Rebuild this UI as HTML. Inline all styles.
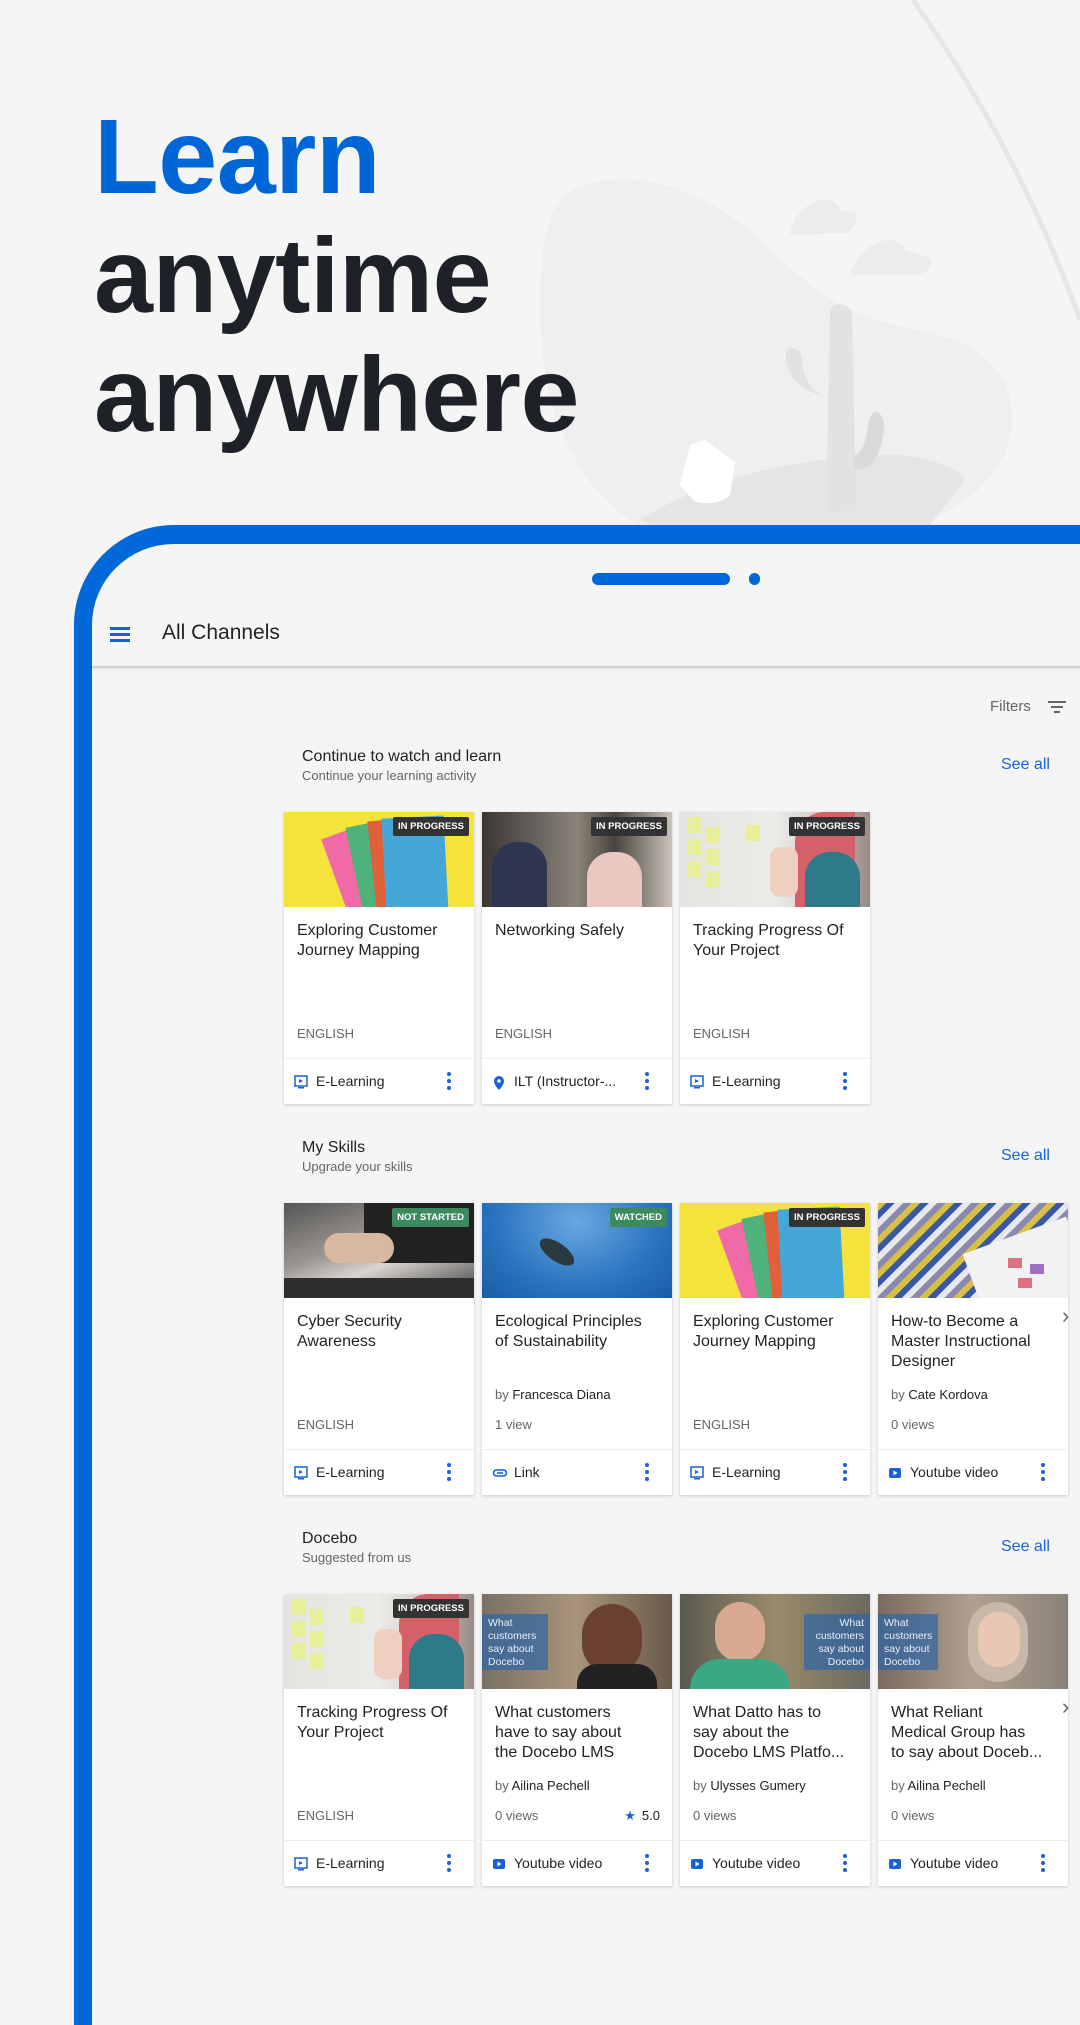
<!DOCTYPE html>
<html><head><meta charset="utf-8">
<style>
*{margin:0;padding:0;box-sizing:border-box}
body{width:1080px;height:1920px;background:#f5f5f5;position:relative;overflow:hidden;font-family:"Liberation Sans",sans-serif}
.h{position:absolute;left:94px;font-weight:bold;font-size:106px;line-height:119px;color:#1f2128;letter-spacing:-0.5px}
.frame{position:absolute;left:74px;top:525px;width:1100px;height:1500px;border-left:18px solid #0068d9;border-top:19px solid #0068d9;border-top-left-radius:100px;background:#f5f5f5}
.a{position:absolute}
.card{position:absolute;width:190px;height:292px;background:#fff;box-shadow:0 1px 3px rgba(0,0,0,.18);overflow:hidden}
.img{position:absolute;left:0;top:0;width:190px;height:95px;overflow:hidden}
.badge{position:absolute;right:5px;top:5px;height:19px;line-height:19px;padding:0 5px;font-size:9.5px;font-weight:bold;color:#fff;background:#333;border-radius:2px}
.g{background:#3d8a5e}
.t{position:absolute;left:13px;top:109px;width:175px;font-size:16px;line-height:20px;color:#222;white-space:nowrap}
.by{position:absolute;left:13px;top:184px;font-size:13px;color:#666}
.by b{font-weight:normal;color:#222}
.m{position:absolute;left:13px;top:214px;font-size:13px;color:#666}
.rt{position:absolute;right:12px;top:214px;font-size:13px;color:#222}
.rt i{color:#1763d6;font-style:normal;margin-right:6px}
.f{position:absolute;left:0;top:246px;width:190px;height:46px;border-top:1px solid #ececec}
.f span{position:absolute;left:32px;top:14px;font-size:14px;color:#222}
.f svg{position:absolute;left:10px;top:16px}
.dots{position:absolute;left:163px;top:13px;width:4px}
.dots i{display:block;width:4px;height:4px;border-radius:2px;background:#1763d6;margin-bottom:3px}
.st{position:absolute;left:302px;font-size:16px;color:#222}
.ss{position:absolute;left:302px;font-size:13px;color:#666}
.sa{position:absolute;left:1001px;font-size:16px;color:#1763d6}
.chev{position:absolute;left:1062px;font-size:22px;color:#666}
.ov{position:absolute;top:20px;width:60px;height:56px;background:rgba(40,100,170,.65);color:#e8eef8;font-size:10.5px;line-height:13px;padding:3px 6px}
</style></head><body>

<svg class="a" style="left:520px;top:0" width="560" height="525" viewBox="520 0 560 525">
<path d="M560 200 C600 160 700 180 760 240 C820 300 860 320 920 330 C990 345 1020 380 1010 440 C990 500 930 525 900 525 L640 525 C590 500 545 430 541 330 C538 260 545 220 560 200Z" fill="#efefef"/>
<path d="M640 520 C700 480 800 455 900 455 C940 460 960 470 965 480 L930 525 L650 525Z" fill="#e5e5e5"/>
<path d="M913 0 C990 110 1040 210 1080 320" stroke="#e6e6e6" stroke-width="5" fill="none"/>
<path d="M790 235 C795 200 835 190 840 210 L855 212 C860 225 850 232 845 233 L790 235Z" fill="#ececec"/>
<path d="M850 275 C860 240 900 230 905 250 L930 258 C935 270 920 275 915 275 L850 275Z" fill="#ececec"/>
<path d="M830 310 C832 302 848 302 852 312 L856 510 L826 512Z" fill="#e2e2e2"/>
<path d="M826 395 C812 395 790 385 786 360 L786 355 C786 345 800 345 802 358 C802 380 815 395 826 395Z" fill="#e2e2e2"/>
<path d="M854 470 C870 470 880 460 884 430 C886 410 870 405 868 425 C866 445 860 455 854 455Z" fill="#dadada"/>
<path d="M690 445 L705 440 L735 462 L730 495 C720 505 700 505 693 500 L680 485Z" fill="#fff"/>
</svg>

<div class="h" style="top:98px;color:#0066d6">Learn</div>
<div class="h" style="top:217px">anytime</div>
<div class="h" style="top:336px">anywhere</div>

<div class="frame"></div>
<div class="a" style="left:592px;top:573px;width:138px;height:12px;border-radius:6px;background:#0068d9"></div>
<div class="a" style="left:749px;top:573px;width:11px;height:12px;border-radius:6px;background:#0068d9"></div>

<div class="a" style="left:110px;top:627px;width:20px;height:2.5px;background:#1763d6;box-shadow:0 6px 0 #1763d6,0 12px 0 #1763d6"></div>
<div class="a" style="left:162px;top:621px;font-size:21px;color:#222">All Channels</div>
<div class="a" style="left:92px;top:666px;width:1000px;height:2px;background:#cfcfcf;box-shadow:0 1px 3px rgba(0,0,0,.12)"></div>

<div class="a" style="left:990px;top:698px;font-size:15px;color:#666">Filters</div>
<div class="a" style="left:1048px;top:701px;width:18px;height:2px;background:#666"></div>
<div class="a" style="left:1051px;top:706px;width:12px;height:2px;background:#666"></div>
<div class="a" style="left:1054px;top:711px;width:6px;height:2px;background:#666"></div>

<!-- Section 1 -->
<div class="st" style="top:748px">Continue to watch and learn</div>
<div class="ss" style="top:768px">Continue your learning activity</div>
<div class="sa" style="top:756px">See all</div>

<div class="card" style="left:284px;top:812px">
 <div class="img" style="background:#f4e33a"><div class="a" style="left:50px;top:20px;width:30px;height:80px;background:#f06aa8;transform:rotate(-20deg)"></div><div class="a" style="left:70px;top:12px;width:30px;height:85px;background:#4fb27a;transform:rotate(-12deg)"></div><div class="a" style="left:88px;top:8px;width:26px;height:90px;background:#e0603a;transform:rotate(-6deg)"></div><div class="a" style="left:100px;top:5px;width:62px;height:95px;background:#45a6d8;transform:rotate(-3deg)"></div><div class="badge">IN PROGRESS</div></div>
 <div class="t">Exploring Customer<br>Journey Mapping</div>
 <div class="m">ENGLISH</div>
 <div class="f"><svg width="14" height="14"><rect x="1" y="1" width="12" height="10" fill="none" stroke="#1763d6" stroke-width="1.5"/><path d="M5 4l4 2-4 2z" fill="#1763d6"/><rect x="4" y="12" width="6" height="1.5" fill="#1763d6"/></svg><span>E-Learning</span><div class="dots"><i></i><i></i><i></i></div></div>
</div>
<div class="card" style="left:482px;top:812px">
 <div class="img" style="background:linear-gradient(90deg,#3b3630 0%,#6a6460 30%,#8a8478 50%,#4a4440 70%,#c9c3bb 100%)"><div class="a" style="left:10px;top:30px;width:55px;height:70px;border-radius:25px 25px 0 0;background:#2d3550"></div><div class="a" style="left:105px;top:40px;width:55px;height:60px;border-radius:25px 25px 0 0;background:#e8c8c0"></div><div class="badge">IN PROGRESS</div></div>
 <div class="t">Networking Safely</div>
 <div class="m">ENGLISH</div>
 <div class="f"><svg width="14" height="16"><path d="M7 1a5 5 0 0 0-5 5c0 4 5 9 5 9s5-5 5-9a5 5 0 0 0-5-5z" fill="#1763d6"/><circle cx="7" cy="6" r="1.8" fill="#fff"/></svg><span>ILT (Instructor-...</span><div class="dots"><i></i><i></i><i></i></div></div>
</div>
<div class="card" style="left:680px;top:812px">
 <div class="img" style="background:linear-gradient(90deg,#e4e4e0 0%,#ebebe8 50%,#d8d0cc 70%,#9a8a86 100%)"><div class="a" style="left:8px;top:5px;width:14px;height:16px;background:#e9ee9a;box-shadow:0 22px 0 #e9ee9a,0 44px 0 #e9ee9a,18px 10px 0 #e9ee9a,18px 32px 0 #e9ee9a,18px 54px 0 #e9ee9a,58px 8px 0 #e9ee9a"></div><div class="a" style="left:115px;top:0;width:60px;height:95px;border-radius:30px 0 0 0;background:#d4606a"></div><div class="a" style="left:125px;top:40px;width:55px;height:55px;border-radius:25px 25px 0 0;background:#2f7a88"></div><div class="a" style="left:90px;top:35px;width:28px;height:50px;border-radius:10px;background:#efcfbf"></div><div class="badge">IN PROGRESS</div></div>
 <div class="t">Tracking Progress Of<br>Your Project</div>
 <div class="m">ENGLISH</div>
 <div class="f"><svg width="14" height="14"><rect x="1" y="1" width="12" height="10" fill="none" stroke="#1763d6" stroke-width="1.5"/><path d="M5 4l4 2-4 2z" fill="#1763d6"/><rect x="4" y="12" width="6" height="1.5" fill="#1763d6"/></svg><span>E-Learning</span><div class="dots"><i></i><i></i><i></i></div></div>
</div>

<!-- Section 2 -->
<div class="st" style="top:1139px">My Skills</div>
<div class="ss" style="top:1159px">Upgrade your skills</div>
<div class="sa" style="top:1147px">See all</div>

<div class="card" style="left:284px;top:1203px">
 <div class="img" style="background:linear-gradient(160deg,#555 0%,#9a9590 40%,#d8d4d0 60%,#3a3a3a 100%)"><div class="a" style="left:80px;top:0;width:110px;height:60px;background:#222"></div><div class="a" style="left:40px;top:30px;width:70px;height:30px;border-radius:15px;background:#d8b8a0"></div><div class="a" style="left:0;top:75px;width:190px;height:20px;background:#2e2e2e"></div><div class="badge g">NOT STARTED</div></div>
 <div class="t">Cyber Security<br>Awareness</div>
 <div class="m">ENGLISH</div>
 <div class="f"><svg width="14" height="14"><rect x="1" y="1" width="12" height="10" fill="none" stroke="#1763d6" stroke-width="1.5"/><path d="M5 4l4 2-4 2z" fill="#1763d6"/><rect x="4" y="12" width="6" height="1.5" fill="#1763d6"/></svg><span>E-Learning</span><div class="dots"><i></i><i></i><i></i></div></div>
</div>
<div class="card" style="left:482px;top:1203px">
 <div class="img" style="background:radial-gradient(ellipse at 50% 20%,#6aa8e0 0%,#2a74c0 60%,#1a5ca6 100%)"><div class="a" style="left:55px;top:40px;width:40px;height:18px;border-radius:50%;background:#2a3a40;transform:rotate(35deg)"></div><div class="badge g">WATCHED</div></div>
 <div class="t">Ecological Principles<br>of Sustainability</div>
 <div class="by">by <b>Francesca Diana</b></div>
 <div class="m">1 view</div>
 <div class="f"><svg width="16" height="14"><rect x="1.5" y="4" width="13" height="6" rx="3" fill="none" stroke="#1763d6" stroke-width="1.6"/><rect x="5" y="6.2" width="6" height="1.6" fill="#1763d6"/></svg><span>Link</span><div class="dots"><i></i><i></i><i></i></div></div>
</div>
<div class="card" style="left:680px;top:1203px">
 <div class="img" style="background:#f4e33a"><div class="a" style="left:50px;top:20px;width:30px;height:80px;background:#f06aa8;transform:rotate(-20deg)"></div><div class="a" style="left:70px;top:12px;width:30px;height:85px;background:#4fb27a;transform:rotate(-12deg)"></div><div class="a" style="left:88px;top:8px;width:26px;height:90px;background:#e0603a;transform:rotate(-6deg)"></div><div class="a" style="left:100px;top:5px;width:62px;height:95px;background:#45a6d8;transform:rotate(-3deg)"></div><div class="badge">IN PROGRESS</div></div>
 <div class="t">Exploring Customer<br>Journey Mapping</div>
 <div class="m">ENGLISH</div>
 <div class="f"><svg width="14" height="14"><rect x="1" y="1" width="12" height="10" fill="none" stroke="#1763d6" stroke-width="1.5"/><path d="M5 4l4 2-4 2z" fill="#1763d6"/><rect x="4" y="12" width="6" height="1.5" fill="#1763d6"/></svg><span>E-Learning</span><div class="dots"><i></i><i></i><i></i></div></div>
</div>
<div class="card" style="left:878px;top:1203px">
 <div class="img" style="background:repeating-linear-gradient(135deg,#d8c040 0 6px,#3a58a8 6px 12px,#e8e8ec 12px 18px,#8a8ab0 18px 24px)"><div class="a" style="left:95px;top:30px;width:110px;height:80px;background:#f2f2f4;transform:rotate(-20deg)"></div><div class="a" style="left:130px;top:55px;width:14px;height:10px;background:#e07080;box-shadow:22px 6px 0 #a070c0,10px 20px 0 #e07080"></div></div>
 <div class="t">How-to Become a<br>Master Instructional<br>Designer</div>
 <div class="by">by <b>Cate Kordova</b></div>
 <div class="m">0 views</div>
 <div class="f"><svg width="14" height="14"><rect x="1" y="2" width="12" height="10" rx="2" fill="#1763d6"/><path d="M5.5 4.5l4 2.5-4 2.5z" fill="#fff"/></svg><span>Youtube video</span><div class="dots"><i></i><i></i><i></i></div></div>
</div>
<div class="chev" style="top:1303px">&#8250;</div>

<!-- Section 3 -->
<div class="st" style="top:1530px">Docebo</div>
<div class="ss" style="top:1550px">Suggested from us</div>
<div class="sa" style="top:1538px">See all</div>

<div class="card" style="left:284px;top:1594px">
 <div class="img" style="background:linear-gradient(90deg,#e4e4e0 0%,#ebebe8 50%,#d8d0cc 70%,#9a8a86 100%)"><div class="a" style="left:8px;top:5px;width:14px;height:16px;background:#e9ee9a;box-shadow:0 22px 0 #e9ee9a,0 44px 0 #e9ee9a,18px 10px 0 #e9ee9a,18px 32px 0 #e9ee9a,18px 54px 0 #e9ee9a,58px 8px 0 #e9ee9a"></div><div class="a" style="left:115px;top:0;width:60px;height:95px;border-radius:30px 0 0 0;background:#d4606a"></div><div class="a" style="left:125px;top:40px;width:55px;height:55px;border-radius:25px 25px 0 0;background:#2f7a88"></div><div class="a" style="left:90px;top:35px;width:28px;height:50px;border-radius:10px;background:#efcfbf"></div><div class="badge">IN PROGRESS</div></div>
 <div class="t">Tracking Progress Of<br>Your Project</div>
 <div class="m">ENGLISH</div>
 <div class="f"><svg width="14" height="14"><rect x="1" y="1" width="12" height="10" fill="none" stroke="#1763d6" stroke-width="1.5"/><path d="M5 4l4 2-4 2z" fill="#1763d6"/><rect x="4" y="12" width="6" height="1.5" fill="#1763d6"/></svg><span>E-Learning</span><div class="dots"><i></i><i></i><i></i></div></div>
</div>
<div class="card" style="left:482px;top:1594px">
 <div class="img" style="background:linear-gradient(90deg,#7a7066 0%,#a8947a 50%,#6a5a4a 100%)"><div class="a" style="left:100px;top:10px;width:60px;height:70px;border-radius:30px;background:#6a4030"></div><div class="a" style="left:95px;top:70px;width:80px;height:30px;border-radius:20px 20px 0 0;background:#222"></div><div class="ov" style="left:0;width:66px">What customers say about Docebo</div></div>
 <div class="t">What customers<br>have to say about<br>the Docebo LMS</div>
 <div class="by">by <b>Ailina Pechell</b></div>
 <div class="m">0 views</div>
 <div class="rt"><i>&#9733;</i>5.0</div>
 <div class="f"><svg width="14" height="14"><rect x="1" y="2" width="12" height="10" rx="2" fill="#1763d6"/><path d="M5.5 4.5l4 2.5-4 2.5z" fill="#fff"/></svg><span>Youtube video</span><div class="dots"><i></i><i></i><i></i></div></div>
</div>
<div class="card" style="left:680px;top:1594px">
 <div class="img" style="background:linear-gradient(90deg,#5a5a50 0%,#9a8a6a 50%,#6a6a60 100%)"><div class="a" style="left:35px;top:8px;width:50px;height:60px;border-radius:25px;background:#d8a890"></div><div class="a" style="left:10px;top:65px;width:100px;height:35px;border-radius:30px 30px 0 0;background:#3aa884"></div><div class="ov" style="right:0;text-align:right;width:66px">What customers say about Docebo</div></div>
 <div class="t">What Datto has to<br>say about the<br>Docebo LMS Platfo...</div>
 <div class="by">by <b>Ulysses Gumery</b></div>
 <div class="m">0 views</div>
 <div class="f"><svg width="14" height="14"><rect x="1" y="2" width="12" height="10" rx="2" fill="#1763d6"/><path d="M5.5 4.5l4 2.5-4 2.5z" fill="#fff"/></svg><span>Youtube video</span><div class="dots"><i></i><i></i><i></i></div></div>
</div>
<div class="card" style="left:878px;top:1594px">
 <div class="img" style="background:linear-gradient(90deg,#7a6a60 0%,#b0a090 50%,#8a8278 100%)"><div class="a" style="left:90px;top:8px;width:60px;height:80px;border-radius:30px;background:#c8b8a8"></div><div class="a" style="left:100px;top:18px;width:42px;height:55px;border-radius:20px;background:#e8c8b4"></div><div class="ov" style="left:0;width:60px">What customers say about Docebo</div></div>
 <div class="t">What Reliant<br>Medical Group has<br>to say about Doceb...</div>
 <div class="by">by <b>Ailina Pechell</b></div>
 <div class="m">0 views</div>
 <div class="f"><svg width="14" height="14"><rect x="1" y="2" width="12" height="10" rx="2" fill="#1763d6"/><path d="M5.5 4.5l4 2.5-4 2.5z" fill="#fff"/></svg><span>Youtube video</span><div class="dots"><i></i><i></i><i></i></div></div>
</div>
<div class="chev" style="top:1694px">&#8250;</div>

</body></html>
